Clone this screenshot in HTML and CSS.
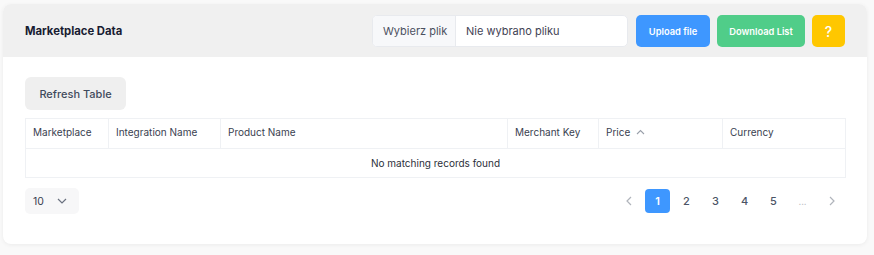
FILE: index.html
```html
<!DOCTYPE html>
<html>
<head>
<meta charset="utf-8">
<link rel="stylesheet" href="styles.css">
</head>
<body>
<div class="card">
  <div class="card-header">
    <h1 class="title">Marketplace Data</h1>
    <div class="actions">
      <div class="file-input">
        <span class="file-btn">Wybierz plik</span>
        <span class="file-name">Nie wybrano pliku</span>
      </div>
      <button class="btn btn-blue">Upload file</button>
      <button class="btn btn-green">Download List</button>
      <button class="btn btn-yellow btn-help">?</button>
    </div>
  </div>
  <div class="card-body">
    <button class="refresh">Refresh Table</button>
    <table class="grid">
      <thead>
        <tr>
          <th class="c1">Marketplace</th>
          <th class="c2">Integration Name</th>
          <th class="c3">Product Name</th>
          <th class="c4">Merchant Key</th>
          <th class="c5">Price <svg class="sort" width="9" height="6" viewBox="0 0 9 6"><path d="M1 5 L4.5 1.5 L8 5" fill="none" stroke="#9aa0aa" stroke-width="1.1"/></svg></th>
          <th class="c6">Currency</th>
        </tr>
      </thead>
      <tbody>
        <tr><td colspan="6" class="empty">No matching records found</td></tr>
      </tbody>
    </table>
    <div class="footer">
      <div class="page-size">
        <span>10</span>
        <svg width="10" height="6" viewBox="0 0 10 6"><path d="M1 1 L5 5 L9 1" fill="none" stroke="#6b7280" stroke-width="1.2"/></svg>
      </div>
      <div class="pager">
        <span class="pg arrow"><svg width="6" height="10" viewBox="0 0 6 10"><path d="M5 1 L1 5 L5 9" fill="none" stroke="#b0b4bb" stroke-width="1.2"/></svg></span>
        <span class="pg active">1</span>
        <span class="pg">2</span>
        <span class="pg">3</span>
        <span class="pg">4</span>
        <span class="pg">5</span>
        <span class="pg dots">...</span>
        <span class="pg arrow"><svg width="6" height="10" viewBox="0 0 6 10"><path d="M1 1 L5 5 L1 9" fill="none" stroke="#b0b4bb" stroke-width="1.2"/></svg></span>
      </div>
    </div>
  </div>
</div>
</body>
</html>
```
FILE: styles.css
```css
* { box-sizing: border-box; }
html, body { margin: 0; padding: 0; }
body {
  background: #f9f9f9;
  font-family: Inter, "Noto Sans", sans-serif;
  width: 874px;
  height: 255px;
  overflow: hidden;
}
.card {
  margin: 4px 0 0 3px;
  width: 864px;
  height: 240px;
  background: #fff;
  border-radius: 8px;
  overflow: hidden;
  box-shadow: 0 1px 4px rgba(0,0,0,0.06);
}
.card-header {
  height: 53px;
  background: #f0f0f0;
  display: flex;
  align-items: center;
  justify-content: space-between;
  padding: 0 22px;
}
.title {
  margin: 0;
  font-size: 11.3px;
  font-weight: 700;
  color: #181c32;
}
.actions {
  display: flex;
  align-items: center;
  gap: 7px;
  padding-top: 1px;
}
.file-input {
  display: flex;
  height: 32px;
  width: 256px;
  border: 1px solid #e8eaee;
  border-radius: 5px;
  overflow: hidden;
  background: #fff;
  font-size: 11px;
  color: #3f4254;
  margin-right: 1px;
}
.file-btn {
  display: flex;
  align-items: center;
  padding: 0 0 0 10px;
  width: 83px;
  flex: none;
  white-space: nowrap;
  background: #f7f8fa;
  border-right: 1px solid #e8eaee;
  color: #4b5060;
}
.file-name {
  display: flex;
  align-items: center;
  padding-left: 10px;
  white-space: nowrap;
  color: #3f4254;
}
.btn {
  height: 32px;
  border: 0;
  border-radius: 5px;
  color: #fff;
  font-family: inherit;
  font-size: 9.3px;
  font-weight: 600;
  padding: 0;
}
.btn-blue { background: #3e97ff; width: 74px; }
.btn-green { background: #50cd89; width: 88px; }
.btn-yellow { background: #ffc700; width: 33px; font-size: 14px; font-weight: 500; }
.card-body {
  padding: 20px 22px 0 22px;
}
.refresh {
  height: 33px;
  width: 101px;
  border: 0;
  border-radius: 6px;
  background: #efefef;
  font-family: inherit;
  font-size: 11px;
  color: #3f4a5c;
  font-weight: 500;
  padding: 0;
  display: block;
}
.grid {
  margin-top: 8px;
  width: 820px;
  border-collapse: collapse;
  table-layout: fixed;
  font-size: 10px;
  color: #3a4150;
}
.grid th, .grid td {
  border: 1px solid #eff1f4;
  height: 30px;
  font-weight: 400;
  text-align: left;
  padding: 0 7px;
}
.grid th { padding-bottom: 3px; }
.grid td { height: 29px; padding-bottom: 1px; }
.c1 { width: 83px; }
.c2 { width: 112px; }
.c3 { width: 287px; }
.c4 { width: 91px; }
.c5 { width: 124px; }
.c6 { width: 123px; }
.sort { margin-left: 3px; vertical-align: 1px; }
.grid td.empty { text-align: center; color: #2b2f3a; }
.footer {
  margin-top: 10px;
  display: flex;
  justify-content: space-between;
  align-items: center;
}
.page-size {
  width: 54px;
  height: 26px;
  background: #f7f7f8;
  border-radius: 5px;
  display: flex;
  align-items: center;
  justify-content: space-between;
  padding: 0 12px 0 8px;
  font-size: 10.5px;
  color: #3a4150;
}
.pager {
  display: flex;
  align-items: center;
  gap: 4px;
  margin-right: 1px;
}
.pg {
  width: 25px;
  height: 24px;
  display: flex;
  align-items: center;
  justify-content: center;
  font-size: 11px;
  color: #4b5466;
  font-weight: 500;
  border-radius: 4px;
}
.pg.active { background: #3e97ff; color: #fff; font-weight: 600; }
.pg.dots { color: #b5b8be; font-size: 9px; }
.pg.arrow { width: 25px; }
```
